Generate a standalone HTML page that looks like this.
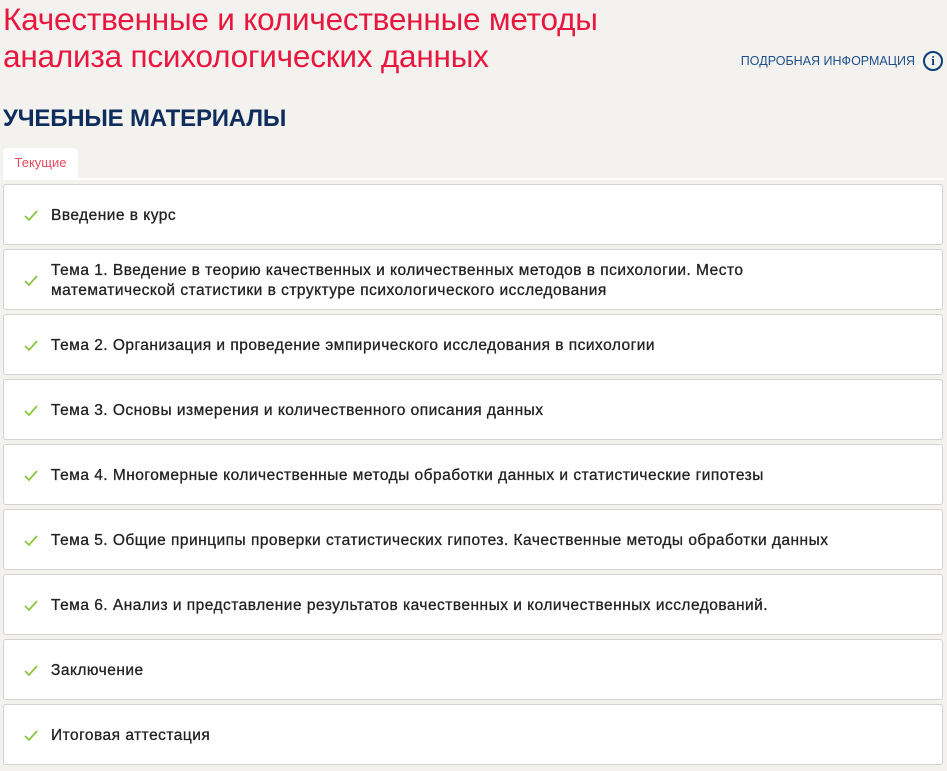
<!DOCTYPE html>
<html><head><meta charset="utf-8"><style>
body{margin:0;background:#f3f2ef;font-family:"Liberation Sans",sans-serif;width:947px;height:771px;overflow:hidden;position:relative}
h1{position:absolute;left:3px;top:1px;margin:0;font-weight:normal;color:#e8173f;font-size:31.5px;line-height:37px;letter-spacing:-0.2px}
.info{position:absolute;right:4px;top:51px;color:#1f4f8a;font-size:12.5px;display:flex;align-items:center;gap:8px}
.info .i{width:16px;height:16px;border:2px solid #0d3e7a;border-radius:50%;color:#0d3e7a;font-weight:bold;font-size:13px;text-align:center;line-height:16px;font-family:"Liberation Serif",serif}
h2{position:absolute;left:3px;top:105px;margin:0;font-size:24px;color:#0e2d5c;font-weight:bold;letter-spacing:-0.2px}
.tab{position:absolute;left:3px;top:148px;width:75px;height:30px;background:#fff;border-radius:4px 4px 0 0;color:#e84a5f;font-size:13px;line-height:30px;text-align:center}
.line{position:absolute;left:3px;right:3px;top:178px;height:2px;background:#fff}
.card{position:absolute;left:3px;width:938px;height:59px;background:#fff;border:1px solid #d3d3d3;border-radius:3px;display:flex;align-items:center;box-sizing:content-box}
.card svg{position:absolute;left:20px;top:50%;margin-top:-5px}
.card span{margin-left:47px;padding-top:3px;font-size:15.5px;letter-spacing:0.48px;color:#222;line-height:20px;-webkit-text-stroke:0.3px #222}
</style></head><body>
<h1>Качественные и количественные методы<br>анализа психологических данных</h1>
<div class="info">ПОДРОБНАЯ ИНФОРМАЦИЯ <div class="i">i</div></div>
<h2>УЧЕБНЫЕ МАТЕРИАЛЫ</h2>
<div class="tab">Текущие</div>
<div class="line"></div>
<div class="card" style="top:184px"><svg width="14" height="12"><path d="M1 6l4 4 8-9" fill="none" stroke="#8cc63f" stroke-width="1.8"/></svg><span>Введение в курс</span></div>
<div class="card" style="top:249px"><svg width="14" height="12"><path d="M1 6l4 4 8-9" fill="none" stroke="#8cc63f" stroke-width="1.8"/></svg><span>Тема 1. Введение в теорию качественных и количественных методов в психологии. Место<br>математической статистики в структуре психологического исследования</span></div>
<div class="card" style="top:314px"><svg width="14" height="12"><path d="M1 6l4 4 8-9" fill="none" stroke="#8cc63f" stroke-width="1.8"/></svg><span>Тема 2. Организация и проведение эмпирического исследования в психологии</span></div>
<div class="card" style="top:379px"><svg width="14" height="12"><path d="M1 6l4 4 8-9" fill="none" stroke="#8cc63f" stroke-width="1.8"/></svg><span>Тема 3. Основы измерения и количественного описания данных</span></div>
<div class="card" style="top:444px"><svg width="14" height="12"><path d="M1 6l4 4 8-9" fill="none" stroke="#8cc63f" stroke-width="1.8"/></svg><span>Тема 4. Многомерные количественные методы обработки данных и статистические гипотезы</span></div>
<div class="card" style="top:509px"><svg width="14" height="12"><path d="M1 6l4 4 8-9" fill="none" stroke="#8cc63f" stroke-width="1.8"/></svg><span>Тема 5. Общие принципы проверки статистических гипотез. Качественные методы обработки данных</span></div>
<div class="card" style="top:574px"><svg width="14" height="12"><path d="M1 6l4 4 8-9" fill="none" stroke="#8cc63f" stroke-width="1.8"/></svg><span>Тема 6. Анализ и представление результатов качественных и количественных исследований.</span></div>
<div class="card" style="top:639px"><svg width="14" height="12"><path d="M1 6l4 4 8-9" fill="none" stroke="#8cc63f" stroke-width="1.8"/></svg><span>Заключение</span></div>
<div class="card" style="top:704px"><svg width="14" height="12"><path d="M1 6l4 4 8-9" fill="none" stroke="#8cc63f" stroke-width="1.8"/></svg><span>Итоговая аттестация</span></div>
</body></html>
